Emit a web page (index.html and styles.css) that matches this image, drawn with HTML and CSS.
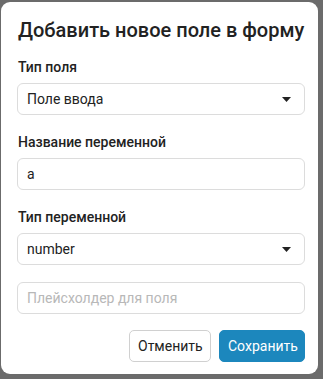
FILE: index.html
```html
<!DOCTYPE html>
<html lang="ru">
<head>
    <meta charset="UTF-8">
    <meta name="viewport" content="width=device-width, initial-scale=1.0">
    <title>Добавить поле</title>
    <link rel="stylesheet" href="styles.css">
</head>
<body>
    <div class="modal">
        <h2 class="modal-title">Добавить новое поле в форму</h2>

        <div class="field">
            <label class="label">Тип поля</label>
            <div class="select">
                <span>Поле ввода</span>
                <svg class="caret" width="9" height="5" viewBox="0 0 9 5"><path d="M0 0h9L4.5 5z" fill="#222"/></svg>
            </div>
        </div>

        <div class="field">
            <label class="label">Название переменной</label>
            <div class="input">a</div>
        </div>

        <div class="field">
            <label class="label">Тип переменной</label>
            <div class="select">
                <span>number</span>
                <svg class="caret" width="9" height="5" viewBox="0 0 9 5"><path d="M0 0h9L4.5 5z" fill="#222"/></svg>
            </div>
        </div>

        <div class="field">
            <div class="input placeholder">Плейсхолдер для поля</div>
        </div>

        <div class="actions">
            <button class="btn btn-cancel">Отменить</button>
            <button class="btn btn-save">Сохранить</button>
        </div>
    </div>
</body>
</html>
```

FILE: styles.css
```css
* {
    margin: 0;
    padding: 0;
    box-sizing: border-box;
    font-family: Roboto, "Liberation Sans", Arial, sans-serif;
}

body {
    background: #6b6b6b;
    padding: 2px 5px 5px 1px;
    height: 100vh;
    overflow: hidden;
}

.modal {
    background: #fff;
    border-radius: 9px;
    width: 317px;
    height: 372px;
    padding: 16px 13px 13px 16px;
}

.modal-title {
    font-size: 20px;
    line-height: 24px;
    font-weight: 500;
    color: #222;
    margin-left: 1px;
    margin-bottom: 15px;
    white-space: nowrap;
}

.field {
    margin-bottom: 17px;
}

.label {
    display: block;
    font-size: 14px;
    line-height: 20px;
    font-weight: 500;
    color: #222;
    margin-left: 1px;
    margin-bottom: 6px;
}

.select,
.input {
    display: flex;
    align-items: center;
    justify-content: space-between;
    height: 32px;
    border: 1px solid #dcdcdc;
    border-radius: 6px;
    padding: 0 13px 0 9px;
    font-size: 14px;
    color: #222;
}

.placeholder {
    color: #b8b8b8;
}

.caret {
    display: block;
}

.actions {
    display: flex;
    justify-content: flex-end;
    gap: 8px;
    margin-top: -1px;
}

.btn {
    height: 32px;
    font-size: 14px;
    border-radius: 5px;
    padding: 0 8px;
    cursor: pointer;
}

.btn-cancel {
    width: 82px;
    background: #fff;
    border: 1px solid #d0d0d0;
    color: #222;
}

.btn-save {
    width: 86px;
    background: #1c87bd;
    border: 1px solid #1c87bd;
    color: #fff;
}
```
